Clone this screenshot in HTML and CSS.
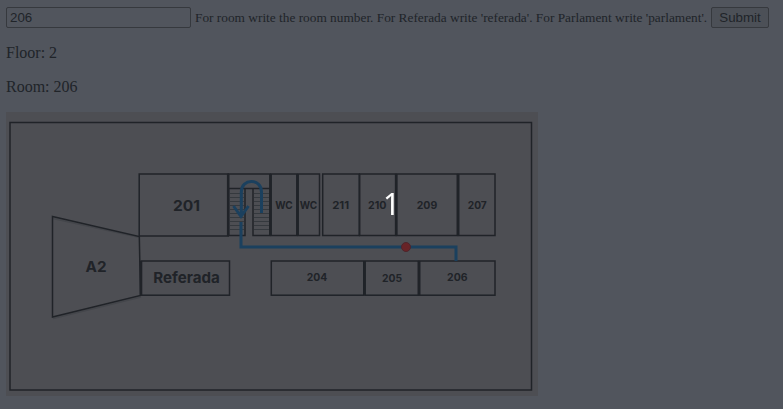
FILE: index.html
```html
<!DOCTYPE html>
<html lang="en">
<head>
<meta charset="utf-8">
<title>Room finder</title>
<link rel="stylesheet" href="styles.css">
</head>
<body>
<form class="search">
  <input class="room-input" type="text" value="206" aria-label="Room">
  <label class="hint">For room write the room number. For Referada write 'referada'. For Parlament write 'parlament'.</label>
  <button class="submit" type="button">Submit</button>
</form>
<p class="info">Floor: 2</p>
<p class="info">Room: 206</p>
<svg class="plan" viewBox="6 112 532 284" width="532" height="284">
  <g class="walls">
    <rect x="10" y="122.5" width="521.5" height="267.5"/>
    <path class="shadow" d="M53 218.500L140 237.500M53 318.500L141 297"/>
    <path d="M52.500 216.500L139.300 236.500L140.500 295.500L52.500 317Z"/>
    <rect x="139.200" y="174" width="89" height="62"/>
    <rect x="228.200" y="174" width="42" height="14.500"/>
    <path d="M228.500 188V235.500H245V188.500M253 188.500V235.500H270V188"/>
    <rect x="271" y="174" width="26" height="61.500"/>
    <rect x="298" y="174" width="21.500" height="61.500"/>
    <rect x="322.700" y="174" width="36.500" height="61.500"/>
    <rect x="359.700" y="174" width="36" height="61.500"/>
    <rect x="396.500" y="174" width="61" height="61.500"/>
    <rect x="458.500" y="174" width="36.500" height="61.500"/>
    <rect x="141.200" y="261" width="88.300" height="34.200"/>
    <rect x="271.300" y="261" width="92.500" height="34.200"/>
    <rect x="365" y="261" width="53.500" height="34.200"/>
    <rect x="419.500" y="261" width="75.500" height="34.200"/>
  </g>
  <path class="thick" d="M228.200 174V236M270.500 174V236M297.500 174V236M396.200 174V236M458 174V236M141 261V295M364.500 261V295M419 261V295"/>
  <path class="steps" d="M229 193.500H244M229 197.500H244M229 201.500H244M229 205.500H244M229 209.500H244M229 213.500H244M229 217.500H244M229 221.500H244M229 225.500H244M229 229.500H244M254 193.500H269M254 197.500H269M254 201.500H269M254 205.500H269M254 209.500H269M254 213.500H269M254 217.500H269M254 221.500H269M254 225.500H269M254 229.500H269"/>
  <g class="route">
    <path d="M261.500 213V192C261.500 178 241.300 178 241.300 192V216M233.500 206L241 216.500L248.500 206"/>
    <path d="M241 222V247H456V261"/>
  </g>
  <circle class="marker" cx="406" cy="247" r="4.500"/>
  <g class="labels">
    <text class="large" x="186.500" y="210.500" textLength="27" lengthAdjust="spacingAndGlyphs">201</text>
    <text class="large" x="96" y="272.200" textLength="21" lengthAdjust="spacingAndGlyphs">A2</text>
    <text class="large" x="186.500" y="283" textLength="66.500" lengthAdjust="spacingAndGlyphs">Referada</text>
    <text x="284" y="208.800" textLength="17.500" lengthAdjust="spacingAndGlyphs">WC</text>
    <text x="308.500" y="208.800" textLength="17.500" lengthAdjust="spacingAndGlyphs">WC</text>
    <text x="340.700" y="208.800" textLength="17" lengthAdjust="spacingAndGlyphs">211</text>
    <text x="377.300" y="208.800" textLength="18.500" lengthAdjust="spacingAndGlyphs">210</text>
    <text x="427" y="209" textLength="20.500" lengthAdjust="spacingAndGlyphs">209</text>
    <text x="477.300" y="209" textLength="19" lengthAdjust="spacingAndGlyphs">207</text>
    <text x="317" y="281" textLength="20.500" lengthAdjust="spacingAndGlyphs">204</text>
    <text x="392" y="281.500" textLength="20" lengthAdjust="spacingAndGlyphs">205</text>
    <text x="457.300" y="281" textLength="20.500" lengthAdjust="spacingAndGlyphs">206</text>
  </g>
</svg>
<div class="overlay">1</div>
</body>
</html>
```
FILE: styles.css
```css
body {
  margin: 7px 6px 0;
  background: #51555d;
  color: #202429;
  font-family: "Liberation Serif", serif;
  font-size: 16px;
  overflow: hidden;
}

.search {
  display: flex;
  height: 21px;
}

.room-input,
.submit {
  box-sizing: border-box;
  height: 21px;
  border: 1px solid #36393e;
  border-radius: 2px;
  background: transparent;
  color: #202429;
  font: 13.333px "Liberation Sans", sans-serif;
}

.room-input {
  width: 185px;
  padding: 1px 3px;
}

.hint {
  width: 512px;
  margin: 0 4px;
  font-size: 13.333px;
  line-height: 21px;
  white-space: nowrap;
}

.submit {
  width: 58px;
  padding: 0;
  background: #4c5057;
}

.info {
  margin: 16px 0;
  line-height: 18px;
}

.plan {
  display: block;
  background: #4d4e53;
}

.walls {
  fill: none;
  stroke: #202328;
  stroke-width: 1.5;
}

.walls .shadow {
  stroke: #44464b;
}

.thick {
  stroke: #202328;
  stroke-width: 2.6;
}

.steps {
  stroke: #303338;
  stroke-width: 0.8;
}

.route {
  fill: none;
  stroke: #1b405e;
  stroke-width: 3;
}

.marker {
  fill: #682327;
  stroke: #4d252c;
}

.labels {
  fill: #202328;
  font: 700 10.5px Inter, sans-serif;
  text-anchor: middle;
}

.labels .large {
  font-size: 15px;
}

.overlay {
  position: fixed;
  inset: -2px 0 0;
  display: flex;
  align-items: center;
  justify-content: center;
  color: #fff;
  font: 30px "Noto Sans", sans-serif;
  pointer-events: none;
}
```
